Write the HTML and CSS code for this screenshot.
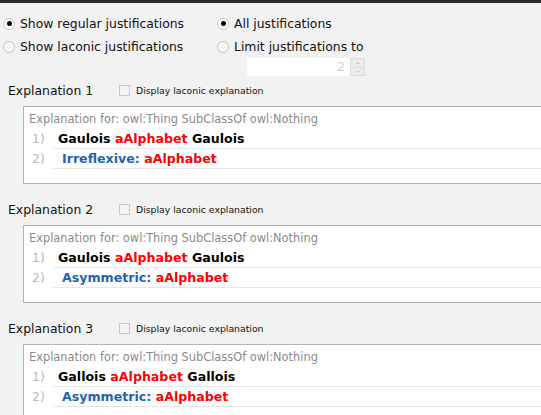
FILE: index.html
```html
<!DOCTYPE html>
<html>
<head>
<meta charset="utf-8">
<link rel="stylesheet" href="styles.css">
</head>
<body>
<div class="topbar"></div>
<div class="options">
  <label class="opt col1"><span class="radio checked"></span>Show regular justifications</label>
  <label class="opt col2"><span class="radio checked"></span>All justifications</label>
  <label class="opt col1"><span class="radio"></span>Show laconic justifications</label>
  <label class="opt col2"><span class="radio"></span>Limit justifications to</label>
  <div class="spacer"></div>
  <div class="spinner"><div class="field">2</div><div class="btns"><span class="up"></span><span class="down"></span></div></div>
</div>

<div class="expl">
  <div class="exhead"><span class="extitle">Explanation 1</span><span class="check"></span><span class="chklabel">Display laconic explanation</span></div>
  <div class="box">
    <div class="for">Explanation for: owl:Thing SubClassOf owl:Nothing</div>
    <div class="row"><span class="num">1)</span><span class="ax">Gaulois <span class="ent">aAlphabet</span> Gaulois</span></div>
    <div class="row"><span class="num">2)</span><span class="ax ind"><span class="kw">Irreflexive:</span> <span class="ent">aAlphabet</span></span></div>
  </div>
</div>

<div class="expl">
  <div class="exhead"><span class="extitle">Explanation 2</span><span class="check"></span><span class="chklabel">Display laconic explanation</span></div>
  <div class="box">
    <div class="for">Explanation for: owl:Thing SubClassOf owl:Nothing</div>
    <div class="row"><span class="num">1)</span><span class="ax">Gaulois <span class="ent">aAlphabet</span> Gaulois</span></div>
    <div class="row"><span class="num">2)</span><span class="ax ind"><span class="kw">Asymmetric:</span> <span class="ent">aAlphabet</span></span></div>
  </div>
</div>

<div class="expl">
  <div class="exhead"><span class="extitle">Explanation 3</span><span class="check"></span><span class="chklabel">Display laconic explanation</span></div>
  <div class="box">
    <div class="for">Explanation for: owl:Thing SubClassOf owl:Nothing</div>
    <div class="row"><span class="num">1)</span><span class="ax">Gallois <span class="ent">aAlphabet</span> Gallois</span></div>
    <div class="row"><span class="num">2)</span><span class="ax ind"><span class="kw">Asymmetric:</span> <span class="ent">aAlphabet</span></span></div>
  </div>
</div>
</body>
</html>
```

FILE: styles.css
```css
html, body {
  margin: 0;
  padding: 0;
}
body {
  background: #f2f2f2;
  font-family: "DejaVu Sans", sans-serif;
  color: #111;
  overflow: hidden;
  width: 541px;
  height: 415px;
}
.topbar {
  height: 3px;
  background: #2b2b2b;
}
.options {
  display: grid;
  grid-template-columns: 214px 1fr;
  grid-template-rows: 23px 23px 19px;
  padding: 9px 0 0 3px;
  font-size: 12.4px;
}
.opt {
  display: flex;
  align-items: center;
  white-space: nowrap;
}
.radio {
  box-sizing: border-box;
  width: 12px;
  height: 12px;
  border-radius: 50%;
  border: 1px solid #c9c9c9;
  background: #f6f6f6;
  margin-right: 5px;
  position: relative;
  flex: none;
}
.radio.checked {
  background: #fff;
}
.radio.checked::after {
  content: "";
  position: absolute;
  left: 2.5px;
  top: 2.5px;
  width: 5px;
  height: 5px;
  border-radius: 50%;
  background: #000;
}
.spinner {
  display: flex;
  margin-left: 30px;
  height: 18px;
}
.field {
  width: 103px;
  background: #fff;
  color: #cfcfcf;
  text-align: right;
  padding-right: 5px;
  box-sizing: border-box;
  line-height: 18px;
  font-size: 12.4px;
}
.btns {
  display: flex;
  flex-direction: column;
  width: 15px;
}
.btns span {
  flex: 1;
  border: 1px solid #dcdcdc;
  background: #ececec;
  position: relative;
}
.btns .up { border-bottom: none; }
.btns span::after {
  content: "";
  position: absolute;
  left: 5px;
  top: 3px;
  border-left: 2px solid transparent;
  border-right: 2px solid transparent;
}
.btns .up::after { border-bottom: 2px solid #c8c8c8; }
.btns .down::after { border-top: 2px solid #c8c8c8; }

.expl {
  margin-top: 3px;
}
.expl + .expl {
  margin-top: 15px;
}
.exhead {
  display: flex;
  align-items: center;
  height: 20px;
  padding-left: 8px;
}
.extitle {
  width: 111px;
  font-size: 12.4px;
  white-space: nowrap;
}
.check {
  box-sizing: border-box;
  width: 11px;
  height: 11px;
  border: 1px solid #c8c8c8;
  background: #f4f4f4;
  margin-right: 6px;
}
.chklabel {
  font-size: 9.3px;
  white-space: nowrap;
}
.box {
  margin: 6px 0 0 23px;
  width: 560px;
  background: #fff;
  border: 1px solid #b4b4b4;
  padding: 5px 0 14px 0;
}
.for {
  padding-left: 5px;
  font-size: 11.4px;
  color: #8a8a8a;
  line-height: 14px;
  height: 17px;
  white-space: nowrap;
}
.row {
  display: flex;
  height: 20px;
}
.num {
  width: 29px;
  box-sizing: border-box;
  padding-left: 8px;
  color: #b9b9b9;
  font-size: 12.4px;
  line-height: 19px;
}
.ax {
  flex: 1;
  border-bottom: 1px solid #e6e6e6;
  padding-left: 5px;
  font-weight: bold;
  font-size: 12.6px;
  line-height: 19px;
  color: #000;
  white-space: nowrap;
}
.ax.ind {
  padding-left: 9px;
}
.ent { color: #f00; }
.kw { color: #1f63b5; }
```
